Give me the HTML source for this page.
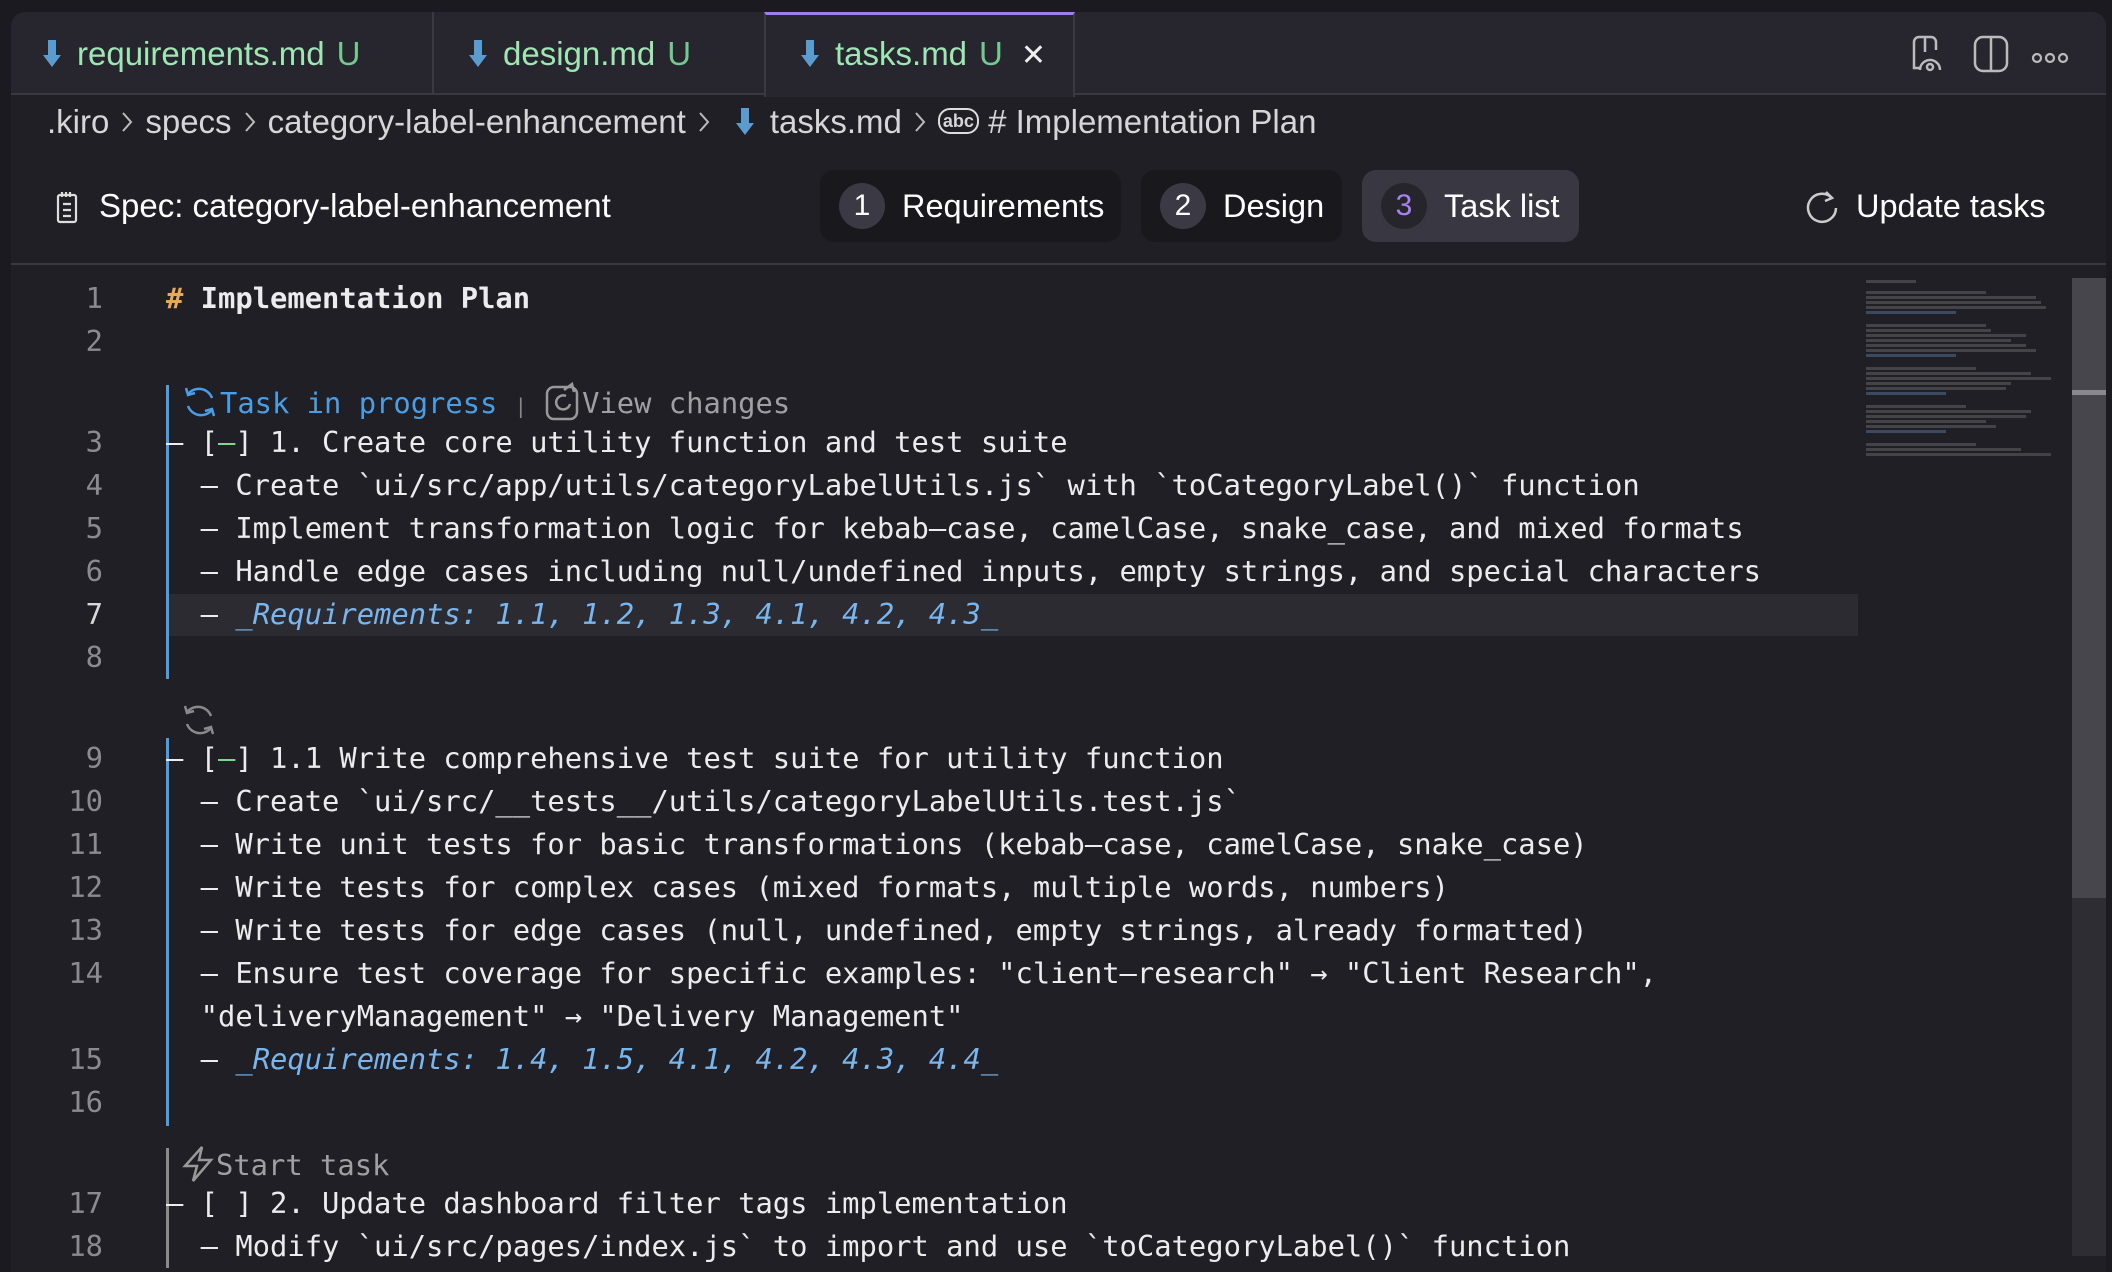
<!DOCTYPE html>
<html><head><meta charset="utf-8"><style>
*{margin:0;padding:0;box-sizing:border-box}
body{width:2112px;height:1256px;background:#1b1a20;position:relative;overflow:hidden;font-family:"Liberation Sans",sans-serif;color:#e6e6e8}
.abs{position:absolute}
.win{position:absolute;left:11px;top:12px;width:2095px;height:1260px;background:#201f25;border-radius:14px 14px 0 0;overflow:hidden}
.tabbar{position:absolute;left:0;top:0;width:100%;height:83px;background:#27262e;border-bottom:2px solid #3a3940}
.tab{position:absolute;top:0;height:83px;font-size:33px;line-height:83px;color:#9ee6b4;white-space:nowrap}
.tab .u{color:#73c991;margin-left:12px}
.ic{display:inline-block;vertical-align:middle;margin-right:14px;margin-top:-6px}
.crumb{position:absolute;left:36px;top:94px;height:56px;line-height:56px;font-size:33px;color:#d6d6d8;white-space:nowrap}
.sv{display:inline-block;vertical-align:middle;margin:-4px 12px 0 12px}
.pill{position:absolute;top:158px;height:72px;border-radius:14px;background:#19181d;font-size:32.5px;line-height:72px;color:#fff;white-space:nowrap}
.num{position:absolute;left:19px;top:13px;width:46px;height:46px;border-radius:23px;background:#3a3944;text-align:center;line-height:46px;font-size:30px}
.code{font-family:"DejaVu Sans Mono","Liberation Mono",monospace;font-size:28.8px;white-space:pre;position:absolute;height:43px;line-height:43px;color:#ececee}
.ln{font-family:"DejaVu Sans Mono","Liberation Mono",monospace;font-size:28.8px;position:absolute;width:70px;text-align:right;left:33px;height:43px;line-height:43px;color:#8b8a90}
.g{color:#7dd690}.rq{color:#79b6ee;font-style:italic}
</style></head><body>
<div class="win">
 <div class="tabbar"></div>
 <div class="tab" style="left:30px"><svg class="ic" width="22" height="30" viewBox="0 0 20 30"><path d="M6 2h8v15h5L10 29 1 17h5z" fill="#5a9bd0"/></svg>requirements.md<span class="u">U</span></div>
 <div class="abs" style="left:421px;top:0;width:2px;height:83px;background:#3a3940"></div>
 <div class="tab" style="left:456px"><svg class="ic" width="22" height="30" viewBox="0 0 20 30"><path d="M6 2h8v15h5L10 29 1 17h5z" fill="#5a9bd0"/></svg>design.md<span class="u">U</span></div>
 <div class="abs" style="left:753px;top:0;width:311px;height:85px;background:#27262e;border-top:3px solid #a07cf0;border-left:2px solid #3a3940;border-right:2px solid #3a3940"></div>
 <div class="tab" style="left:788px"><svg class="ic" width="22" height="30" viewBox="0 0 20 30"><path d="M6 2h8v15h5L10 29 1 17h5z" fill="#5a9bd0"/></svg>tasks.md<span class="u">U</span><span style="color:#eee;margin-left:18px;font-size:30px">✕</span></div>
 <svg class="abs" style="left:1895px;top:22px" width="40" height="40" viewBox="0 0 40 40" fill="none" stroke="#bbb" stroke-width="2.5"><path d="M14 34H8V8a5 5 0 0 1 5-5h12a5 5 0 0 1 5 5v8"/><path d="M19 4v14"/><path d="M14 36a10 10 0 0 1 16-8 10 10 0 0 1 4 8"/><circle cx="24" cy="33" r="3"/></svg>
 <svg class="abs" style="left:1960px;top:22px" width="40" height="40" viewBox="0 0 40 40" fill="none" stroke="#bbb" stroke-width="2.5"><rect x="4" y="3" width="32" height="34" rx="8"/><path d="M20 3v34"/></svg>
 <svg class="abs" style="left:2020px;top:40px" width="40" height="12" viewBox="0 0 40 12" fill="none" stroke="#bbb" stroke-width="2.2"><circle cx="6" cy="6" r="4"/><circle cx="19" cy="6" r="4"/><circle cx="32" cy="6" r="4"/></svg>

 <div class="crumb" style="top:82px">.kiro<svg class="sv" width="12" height="22" viewBox="0 0 12 22" fill="none" stroke="#bbb" stroke-width="2"><path d="M2 2l8 9-8 9"/></svg>specs<svg class="sv" width="12" height="22" viewBox="0 0 12 22" fill="none" stroke="#bbb" stroke-width="2"><path d="M2 2l8 9-8 9"/></svg>category-label-enhancement<svg class="sv" width="12" height="22" viewBox="0 0 12 22" fill="none" stroke="#bbb" stroke-width="2"><path d="M2 2l8 9-8 9"/></svg><svg style="vertical-align:middle;margin:-6px 14px 0 12px" width="22" height="30" viewBox="0 0 20 30"><path d="M6 2h8v15h5L10 29 1 17h5z" fill="#5a9bd0"/></svg>tasks.md<svg class="sv" width="12" height="22" viewBox="0 0 12 22" fill="none" stroke="#bbb" stroke-width="2"><path d="M2 2l8 9-8 9"/></svg><span style="display:inline-block;border:2.5px solid #ddd;border-radius:12px;font-size:18px;line-height:22px;padding:0 3px;vertical-align:middle;margin-top:-6px;font-weight:bold">abc</span> # Implementation Plan</div>

 <svg class="abs" style="left:44px;top:178px" width="24" height="34" viewBox="0 0 24 34" fill="none" stroke="#ddd" stroke-width="2.2"><rect x="3" y="5" width="18" height="27" rx="2"/><path d="M7 2v5M11 2v5M15 2v5M8 14h8M8 20h8M8 26h8"/></svg>
 <div class="abs" style="left:88px;top:166px;font-size:33px;line-height:56px;color:#fff">Spec: category-label-enhancement</div>
 <div class="pill" style="left:809px;width:301px"><div class="num">1</div><span style="position:absolute;left:82px">Requirements</span></div>
 <div class="pill" style="left:1130px;width:201px"><div class="num">2</div><span style="position:absolute;left:82px">Design</span></div>
 <div class="pill" style="left:1351px;width:217px;background:#393741"><div class="num" style="background:#26252b;color:#a882f5">3</div><span style="position:absolute;left:82px">Task list</span></div>
 <svg class="abs" style="left:1793px;top:176px" width="36" height="40" viewBox="0 0 36 40" fill="none" stroke="#ccc" stroke-width="2.5"><path d="M28 10A14 14 0 1 0 32 20"/><path d="M22 4l6 6-7 3"/></svg>
 <div class="abs" style="left:1845px;top:166px;font-size:32.5px;line-height:56px;color:#fff">Update tasks</div>
 <div class="abs" style="left:0;top:251px;width:100%;height:2px;background:#3a3940"></div>
</div>

<!-- editor -->
<div class="abs" style="left:166px;top:594px;width:1692px;height:42px;background:#2c2b32"></div>
<div class="abs" style="left:166px;top:385px;width:3px;height:294px;background:#4a9ee6"></div>
<div class="abs" style="left:166px;top:738px;width:3px;height:388px;background:#4a9ee6"></div>
<div class="abs" style="left:166px;top:1148px;width:3px;height:120px;background:#8a8a8a"></div>

<div class="ln" style="top:277px">1</div><div class="code" style="left:166px;top:277px;font-weight:bold"><span style="color:#e8a956">#</span> Implementation Plan</div>
<div class="ln" style="top:320px">2</div>
<div class="code" style="left:180px;top:382px;color:#4a9ee6"><svg style="vertical-align:middle;margin-top:-6px" width="40" height="40" viewBox="0 0 40 40" fill="none" stroke="#4a9ee6" stroke-width="2.5"><path d="M8 12a14 14 0 0 1 24 4M32 28A14 14 0 0 1 8 24"/><path d="M6 6l2 7 7-2M34 34l-2-7-7 2"/></svg>Task in progress <span style="color:#888;font-size:20px">|</span> <svg style="vertical-align:middle;margin-top:-6px" width="38" height="40" viewBox="0 0 38 40" fill="none" stroke="#999" stroke-width="2.5"><rect x="3" y="5" width="30" height="32" rx="7"/><path d="M22 14a7 7 0 1 0 4 8M20 8l8-6 2 8"/></svg><span style="color:#a0a0a4">View changes</span></div>
<div class="ln" style="top:421px">3</div><div class="code" style="left:166px;top:421px">– [<span class="g">–</span>] 1. Create core utility function and test suite</div>
<div class="ln" style="top:464px">4</div><div class="code" style="left:166px;top:464px">  – Create `ui/src/app/utils/categoryLabelUtils.js` with `toCategoryLabel()` function</div>
<div class="ln" style="top:507px">5</div><div class="code" style="left:166px;top:507px">  – Implement transformation logic for kebab–case, camelCase, snake_case, and mixed formats</div>
<div class="ln" style="top:550px">6</div><div class="code" style="left:166px;top:550px">  – Handle edge cases including null/undefined inputs, empty strings, and special characters</div>
<div class="ln" style="top:593px;color:#d8d8da">7</div><div class="code" style="left:166px;top:593px">  – <span class="rq">_Requirements: 1.1, 1.2, 1.3, 4.1, 4.2, 4.3_</span></div>
<div class="ln" style="top:636px">8</div>
<svg class="abs" style="left:178px;top:700px" width="42" height="40" viewBox="0 0 40 40" fill="none" stroke="#8a8a8e" stroke-width="2.5"><path d="M8 12a14 14 0 0 1 24 4M32 28A14 14 0 0 1 8 24"/><path d="M6 6l2 7 7-2M34 34l-2-7-7 2"/></svg>
<div class="ln" style="top:737px">9</div><div class="code" style="left:166px;top:737px">– [<span class="g">–</span>] 1.1 Write comprehensive test suite for utility function</div>
<div class="ln" style="top:780px">10</div><div class="code" style="left:166px;top:780px">  – Create `ui/src/__tests__/utils/categoryLabelUtils.test.js`</div>
<div class="ln" style="top:823px">11</div><div class="code" style="left:166px;top:823px">  – Write unit tests for basic transformations (kebab–case, camelCase, snake_case)</div>
<div class="ln" style="top:866px">12</div><div class="code" style="left:166px;top:866px">  – Write tests for complex cases (mixed formats, multiple words, numbers)</div>
<div class="ln" style="top:909px">13</div><div class="code" style="left:166px;top:909px">  – Write tests for edge cases (null, undefined, empty strings, already formatted)</div>
<div class="ln" style="top:952px">14</div><div class="code" style="left:166px;top:952px">  – Ensure test coverage for specific examples: "client–research" → "Client Research",</div>
<div class="code" style="left:166px;top:995px">  "deliveryManagement" → "Delivery Management"</div>
<div class="ln" style="top:1038px">15</div><div class="code" style="left:166px;top:1038px">  – <span class="rq">_Requirements: 1.4, 1.5, 4.1, 4.2, 4.3, 4.4_</span></div>
<div class="ln" style="top:1081px">16</div>
<div class="code" style="left:180px;top:1144px;color:#a0a0a4"><svg style="vertical-align:middle;margin-top:-6px" width="36" height="40" viewBox="0 0 36 40" fill="none" stroke="#999" stroke-width="2.5"><path d="M22 3L5 22h12l-4 15 18-21H19z"/></svg>Start task</div>
<div class="ln" style="top:1182px">17</div><div class="code" style="left:166px;top:1182px">– [ ] 2. Update dashboard filter tags implementation</div>
<div class="ln" style="top:1225px">18</div><div class="code" style="left:166px;top:1225px">  – Modify `ui/src/pages/index.js` to import and use `toCategoryLabel()` function</div>

<!-- minimap -->
<div class="abs" style="left:1866px;top:278px;width:200px;height:240px;opacity:.35">
 <div style="height:3px;width:50px;background:#888;margin:2px 0 8px"></div>
 <div style="height:3px;width:120px;background:#888;margin:2px 0"></div><div style="height:3px;width:170px;background:#888;margin:2px 0"></div><div style="height:3px;width:175px;background:#888;margin:2px 0"></div><div style="height:3px;width:180px;background:#888;margin:2px 0"></div><div style="height:3px;width:90px;background:#6a9ed0;margin:2px 0 10px"></div>
 <div style="height:3px;width:120px;background:#888;margin:2px 0"></div><div style="height:3px;width:125px;background:#888;margin:2px 0"></div><div style="height:3px;width:160px;background:#888;margin:2px 0"></div><div style="height:3px;width:145px;background:#888;margin:2px 0"></div><div style="height:3px;width:160px;background:#888;margin:2px 0"></div><div style="height:3px;width:170px;background:#888;margin:2px 0"></div><div style="height:3px;width:90px;background:#6a9ed0;margin:2px 0 10px"></div>
 <div style="height:3px;width:110px;background:#888;margin:2px 0"></div><div style="height:3px;width:165px;background:#888;margin:2px 0"></div><div style="height:3px;width:185px;background:#888;margin:2px 0"></div><div style="height:3px;width:145px;background:#888;margin:2px 0"></div><div style="height:3px;width:140px;background:#888;margin:2px 0"></div><div style="height:3px;width:80px;background:#6a9ed0;margin:2px 0 10px"></div>
 <div style="height:3px;width:100px;background:#888;margin:2px 0"></div><div style="height:3px;width:165px;background:#888;margin:2px 0"></div><div style="height:3px;width:160px;background:#888;margin:2px 0"></div><div style="height:3px;width:120px;background:#888;margin:2px 0"></div><div style="height:3px;width:130px;background:#888;margin:2px 0"></div><div style="height:3px;width:80px;background:#6a9ed0;margin:2px 0 10px"></div>
 <div style="height:3px;width:110px;background:#888;margin:2px 0"></div><div style="height:3px;width:155px;background:#888;margin:2px 0"></div><div style="height:3px;width:185px;background:#888;margin:2px 0"></div>
</div>
<div class="abs" style="left:2072px;top:278px;width:34px;height:978px;background:#2e2d33"></div>
<div class="abs" style="left:2072px;top:278px;width:34px;height:620px;background:#47464c"></div>
<div class="abs" style="left:2072px;top:390px;width:34px;height:5px;background:#8a8a8e"></div>
</body></html>
